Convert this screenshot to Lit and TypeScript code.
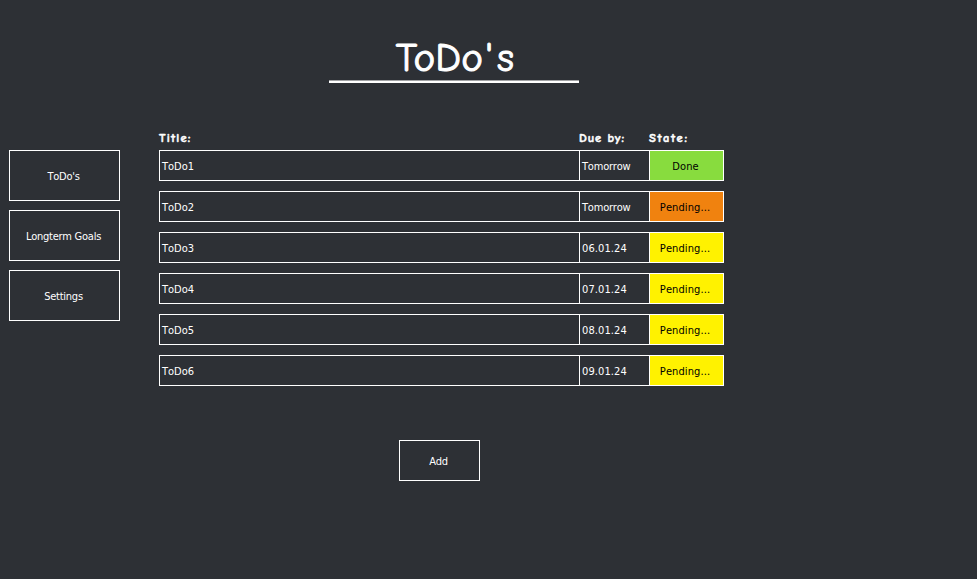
import { LitElement, html, css } from "lit";
import { customElement } from "lit/decorators.js";

interface Todo {
  title: string;
  due: string;
  state: "done" | "urgent" | "pending";
}

const TODOS: Todo[] = [
  { title: "ToDo1", due: "Tomorrow", state: "done" },
  { title: "ToDo2", due: "Tomorrow", state: "urgent" },
  { title: "ToDo3", due: "06.01.24", state: "pending" },
  { title: "ToDo4", due: "07.01.24", state: "pending" },
  { title: "ToDo5", due: "08.01.24", state: "pending" },
  { title: "ToDo6", due: "09.01.24", state: "pending" },
];

@customElement("app-root")
export class AppRoot extends LitElement {
  static styles = css`
    :host {
      display: block;
      box-sizing: border-box;
      width: 100%;
      height: 100vh;
      overflow: hidden;
      background: #2d3035;
      color: #fff;
      font: 11px/13px Tahoma, "DejaVu Sans Condensed", "DejaVu Sans", sans-serif;
      font-stretch: condensed;
      font-kerning: none;
    }
    * { box-sizing: border-box; }
    header {
      width: 250px;
      height: 83px;
      margin-left: 329px;
      padding-top: 31px;
      border-bottom: 2px solid #fff;
      box-shadow: inset 0 -1px #a2a3a5;
    }
    h1 {
      margin: 0;
      padding-left: 2px;
      text-align: center;
      font: 400 41px/54px "Comic Sans MS", "Comic Neue", Lato, sans-serif;
      font-kerning: normal;
      letter-spacing: 0.1px;
      -webkit-text-stroke: 1px #fff;
      stroke-linejoin: round;
      white-space: nowrap;
    }
    .mark { margin: 0 4px 0 2px; }
    .body {
      display: grid;
      grid-template-columns: 111px 565px;
      column-gap: 39px;
      padding: 48px 0 0 9px;
    }
    nav {
      display: flex;
      flex-direction: column;
      gap: 9px;
      padding-top: 19px;
    }
    button {
      height: 51px;
      padding: 2px 2px 0 0;
      border: 1px solid #fff;
      background: none;
      color: inherit;
      font: inherit;
      font-kerning: none;
      letter-spacing: -0.25px;
    }
    .row {
      display: grid;
      grid-template-columns: 420px 70px 75px;
    }
    .head {
      height: 19px;
      font: 700 12.5px/15px "Comic Sans MS", "Comic Neue", Lato, sans-serif;
      letter-spacing: 1.2px;
      -webkit-text-stroke: 0.5px #fff;
    }
    .head .due { letter-spacing: 0.9px; }
    .head .status { letter-spacing: 1.7px; }
    .list { display: flex; flex-direction: column; gap: 10px; }
    .item { height: 31px; border: 1px solid #fff; grid-template-columns: 419px 70px 74px; }
    .cell { padding: 9px 0 0 2px; }
    .cell + .cell { border-left: 1px solid #fff; letter-spacing: 0.1px; }
    .cell + .cell.word { letter-spacing: -0.2px; }
    .cell.state { padding: 9px 3px 0 0; text-align: center; color: #000; }
    .cell.done { padding-right: 2px; background: #88dc3e; }
    .urgent { background: #f0820f; }
    .pending { background: #fff200; }
    .add { display: block; width: 81px; height: 41px; margin: 54px 0 0 240px; }
  `;

  render() {
    return html`
      <header><h1>ToDo<span class="mark">'</span>s</h1></header>
      <div class="body">
        <nav>
          <button>ToDo's</button>
          <button>Longterm Goals</button>
          <button>Settings</button>
        </nav>
        <main>
          <div class="row head">
            <span>Title:</span><span class="due">Due by:</span><span class="status">State:</span>
          </div>
          <div class="list">
            ${TODOS.map(
              (t) => html`<div class="row item">
                <div class="cell">${t.title}</div>
                <div class="cell ${t.due === "Tomorrow" ? "word" : ""}">${t.due}</div>
                <div class="cell state ${t.state}">${t.state === "done" ? "Done" : "Pending..."}</div>
              </div>`
            )}
          </div>
          <button class="add">Add</button>
        </main>
      </div>
    `;
  }
}
